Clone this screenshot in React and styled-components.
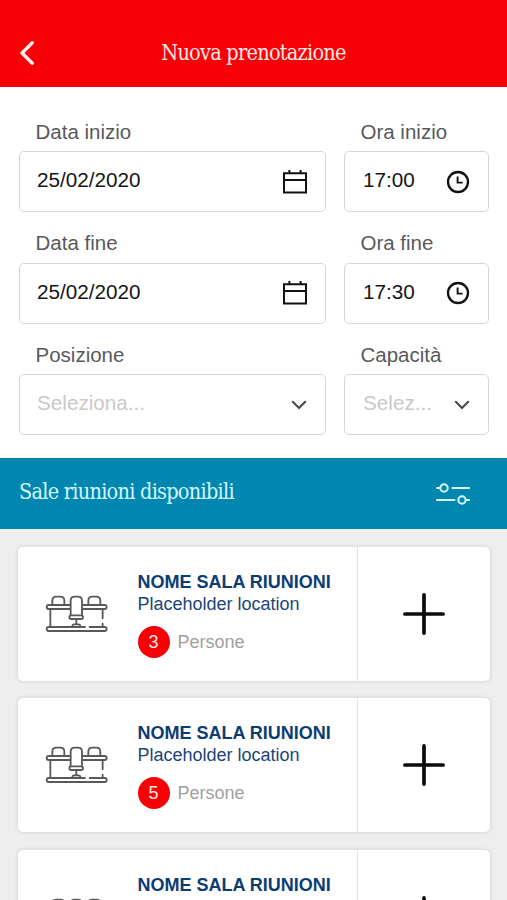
import styled, { createGlobalStyle } from "styled-components";

const GlobalStyle = createGlobalStyle`
  * {
    box-sizing: border-box;
  }

  body {
    margin: 0;
    background-color: #ffffff;
    font-family: "Liberation Sans", Arial, sans-serif;
    overflow: hidden;
  }

  svg {
    display: block;
    flex-shrink: 0;
  }
`;

const Page = styled.div`
  width: 100%;
  height: 900px;
  display: flex;
  flex-direction: column;
  overflow: hidden;
`;

const Header = styled.header`
  height: 86.5px;
  flex-shrink: 0;
  display: grid;
  grid-template-columns: 54px 1fr 54px;
  align-items: center;
  padding-top: 20px;
  background-color: #f90007;
`;

const BackButton = styled.button`
  border: none;
  background: none;
  padding: 0 0 0 18px;
`;

const slabFont = `
  font-family: "DejaVu Serif Condensed", "DejaVu Serif", serif;
  font-stretch: condensed;
  font-weight: 400;
  white-space: nowrap;
`;

const Title = styled.h1`
  ${slabFont}
  margin: 0;
  font-size: 21.5px;
  letter-spacing: -0.75px;
  line-height: 28px;
  text-align: center;
  color: #ffe9e6;
`;

const Form = styled.form`
  height: 371.5px;
  flex-shrink: 0;
  display: grid;
  grid-template-columns: 307px 145px;
  grid-auto-rows: 111.6px;
  column-gap: 18px;
  padding: 25px 18px 0 19px;
`;

const Label = styled.label`
  display: block;
  height: 39.5px;
  padding-left: 16.5px;
  font-size: 20.5px;
  line-height: 39px;
  color: #58595b;
`;

const Box = styled.div`
  height: 61px;
  display: flex;
  align-items: center;
  justify-content: space-between;
  padding: 0 ${(props) => props.$right || 19}px 0 17px;
  border: 1.5px solid #d6d6d6;
  border-radius: 5px;
  background-color: #ffffff;
`;

const Value = styled.span`
  padding-bottom: 3px;
  padding-left: ${(props) => (props.$narrow ? 1 : 0)}px;
  font-size: 20.7px;
  line-height: 24px;
  color: ${(props) => (props.$placeholder ? "#c9c9c9" : "#161616")};
`;

const Toolbar = styled.div`
  height: 71px;
  flex-shrink: 0;
  display: flex;
  align-items: center;
  justify-content: space-between;
  padding: 0 36px 0 19px;
  background-color: #0186b0;
`;

const ToolbarTitle = styled.h2`
  ${slabFont}
  margin: 0;
  padding-bottom: 4px;
  font-size: 21.5px;
  letter-spacing: -0.75px;
  line-height: 28px;
  color: #d5f6ff;
`;

const List = styled.main`
  flex: 1;
  min-height: 0;
  display: flex;
  flex-direction: column;
  gap: 17.4px;
  padding: 18px 17.5px 0;
  background-color: #eeeeee;
  overflow: hidden;
`;

const Card = styled.article`
  height: 134px;
  flex-shrink: 0;
  display: grid;
  grid-template-columns: 120px 1fr 133px;
  border-radius: 5px;
  background-color: #ffffff;
  box-shadow: 0 0 4px rgba(0, 0, 0, 0.15);
`;

const CardIcon = styled.div`
  padding: 47px 0 0 27px;
`;

const Info = styled.div`
  padding-top: 24px;
`;

const RoomName = styled.h3`
  margin: 0;
  font-size: 18px;
  font-weight: 700;
  line-height: 22px;
  white-space: nowrap;
  color: #0b3c74;
`;

const Location = styled.p`
  margin: 0;
  font-size: 18px;
  line-height: 22px;
  color: #1a4579;
`;

const Capacity = styled.div`
  display: flex;
  align-items: center;
  gap: 8px;
  margin-top: 10.5px;
  font-size: 18px;
  line-height: 32px;
  color: #a0a0a0;
`;

const Badge = styled.span`
  width: 32px;
  height: 32px;
  border-radius: 50%;
  text-align: center;
  color: #ffe9e6;
  background-color: #f90007;
`;

const AddButton = styled.button`
  display: flex;
  align-items: center;
  justify-content: center;
  padding: 0;
  border: none;
  border-left: 1.5px solid #e4e4e4;
  border-radius: 0 5px 5px 0;
  background: none;
`;

const BackIcon = () => (
  <svg width="18" height="28" viewBox="0 0 18 28" fill="none">
    <path
      d="M14.3 3.7 4 14l10.3 10.3"
      stroke="#ffeeeb"
      strokeWidth="3.4"
      strokeLinecap="round"
      strokeLinejoin="round"
    />
  </svg>
);

const CalendarIcon = () => (
  <svg width="24" height="24" viewBox="0 0 24 24" fill="none">
    <path
      d="M1 3.3h22v19.2H1zM1 10h22M6.4 0v3.3M17.6 0v3.3"
      stroke="#111111"
      strokeWidth="2"
    />
  </svg>
);

const ClockIcon = () => (
  <svg width="24" height="24" viewBox="0 0 24 24" fill="none" stroke="#111111">
    <circle cx="12" cy="12" r="10" strokeWidth="2.3" />
    <path d="M11.6 6.5v6.1h5" strokeWidth="1.9" />
  </svg>
);

const ChevronIcon = () => (
  <svg width="16" height="10" viewBox="0 0 16 10" fill="none">
    <path
      d="M1.8 1.8 8 8l6.2-6.2"
      stroke="#4a4a4a"
      strokeWidth="2.1"
      strokeLinecap="round"
    />
  </svg>
);

const FilterIcon = () => (
  <svg
    width="36"
    height="24"
    viewBox="0 0 36 24"
    fill="none"
    stroke="#d5f6ff"
    strokeWidth="2.1"
    strokeLinecap="round"
  >
    <circle cx="9" cy="6" r="3.7" />
    <path d="M2 6h2.5M17.5 6H34" />
    <circle cx="27" cy="18" r="3.7" />
    <path d="M2 18h17.5M31.5 18H34" />
  </svg>
);

const PlusIcon = () => (
  <svg width="42" height="42" viewBox="0 0 42 42" fill="none">
    <path
      d="M21 1.9v38.2M1.9 21h38.2"
      stroke="#0c0c0c"
      strokeWidth="3.7"
      strokeLinecap="round"
    />
  </svg>
);

const MeetingRoomIcon = () => (
  <svg
    width="63.33"
    height="38.67"
    viewBox="44 42 190 116"
    fill="none"
    stroke="#59595b"
    strokeWidth="5.5"
    strokeLinecap="round"
    strokeLinejoin="round"
  >
    {/* desk */}
    <path d="M118 75H55a6 6 0 0 0 0 12h63M158 75h65a6 6 0 0 1 0 12h-65" />
    <path d="M60 88v52M217 88v27M217 131v9" />
    <path d="M164 141H55a6 6 0 0 0 0 12h168a6 6 0 0 0 0-12h-45" />
    {/* side chairs */}
    <path d="M66 73V62q0-12 12-12h12q12 0 12 12v11M174 73V62q0-12 12-12h12q12 0 12 12v11" />
    {/* front chair */}
    <path d="M121 106V62q0-12 12-12h10q12 0 12 12v44" />
    <rect x="117" y="106" width="41" height="11" rx="5.5" />
    <path d="M138 118v14M126 139q0-6 6-6h12q6 0 6 6" />
  </svg>
);

const fields = [
  { label: "Data inizio", value: "25/02/2020", icon: "calendar" },
  { label: "Ora inizio", value: "17:00", icon: "clock", narrow: true },
  { label: "Data fine", value: "25/02/2020", icon: "calendar" },
  { label: "Ora fine", value: "17:30", icon: "clock", narrow: true },
  { label: "Posizione", value: "Seleziona...", icon: "chevron" },
  { label: "Capacità", value: "Selez...", icon: "chevron", narrow: true },
];

const icons = {
  calendar: CalendarIcon,
  clock: ClockIcon,
  chevron: ChevronIcon,
};

const rooms = [
  { id: 1, name: "NOME SALA RIUNIONI", location: "Placeholder location", seats: 3 },
  { id: 2, name: "NOME SALA RIUNIONI", location: "Placeholder location", seats: 5 },
  { id: 3, name: "NOME SALA RIUNIONI", location: "Placeholder location", seats: 8 },
];

const Field = ({ label, value, icon, narrow }) => {
  const Icon = icons[icon];

  return (
    <div>
      <Label>{label}</Label>
      <Box $right={narrow ? 18 : 18.5}>
        <Value $narrow={narrow} $placeholder={icon === "chevron"}>
          {value}
        </Value>
        <Icon />
      </Box>
    </div>
  );
};

const RoomCard = ({ name, location, seats }) => {
  return (
    <Card>
      <CardIcon>
        <MeetingRoomIcon />
      </CardIcon>
      <Info>
        <RoomName>{name}</RoomName>
        <Location>{location}</Location>
        <Capacity>
          <Badge>{seats}</Badge>
          Persone
        </Capacity>
      </Info>
      <AddButton type="button" aria-label="Aggiungi">
        <PlusIcon />
      </AddButton>
    </Card>
  );
};

const App = () => {
  return (
    <>
      <GlobalStyle />
      <Page>
        <Header>
          <BackButton type="button" aria-label="Indietro">
            <BackIcon />
          </BackButton>
          <Title>Nuova prenotazione</Title>
        </Header>
        <Form>
          {fields.map((field) => (
            <Field key={field.label} {...field} />
          ))}
        </Form>
        <Toolbar>
          <ToolbarTitle>Sale riunioni disponibili</ToolbarTitle>
          <FilterIcon />
        </Toolbar>
        <List>
          {rooms.map((room) => (
            <RoomCard key={room.id} {...room} />
          ))}
        </List>
      </Page>
    </>
  );
};

export default App;
